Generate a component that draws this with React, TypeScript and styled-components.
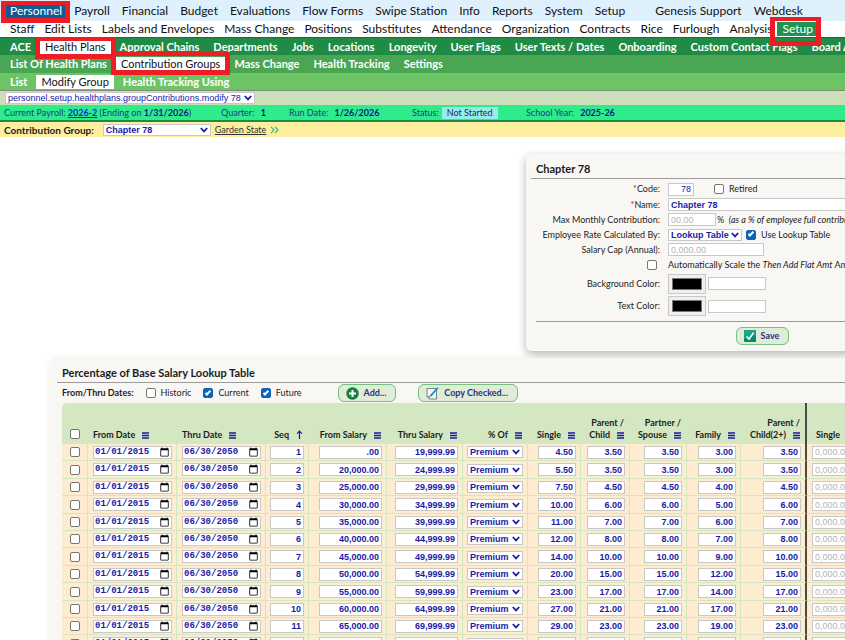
import React from "react";
import styled, { createGlobalStyle, css } from "styled-components";

const ui = `Lato, "Open Sans", sans-serif`;
const field = `"Liberation Sans", Arial, sans-serif`;
const navy = "#1a1aa6";

const GlobalStyle = createGlobalStyle`
  *, *::before, *::after { box-sizing: border-box; }
  body { margin: 0; background: #fff; color: #1c1c1c; font: 10px/14px ${ui}; overflow: hidden; }
`;

const Page = styled.div`
  min-height: 100vh;
  overflow: hidden;
`;

/* ---------- navigation ---------- */

type Tone = "top" | "white" | "dark" | "mid" | "light";
const tones: Record<Tone, { bg: string; fg: string; height: number; border: string; gap: number }> = {
  top: { bg: "#dff0fd", fg: "#111", height: 21, border: "none", gap: 2 },
  white: { bg: "#fff", fg: "#111", height: 17, border: "1px solid #1d6b3a", gap: 0 },
  dark: { bg: "#1f8b45", fg: "#fff", height: 17, border: "none", gap: 4 },
  mid: { bg: "#4aa653", fg: "#fff", height: 18, border: "none", gap: 4 },
  light: { bg: "#6cc464", fg: "#fff", height: 18, border: "1px solid #7d8c78", gap: 4 },
};

const NavBar = styled.nav<{ $tone: Tone }>`
  display: flex;
  align-items: center;
  gap: ${(p) => tones[p.$tone].gap}px;
  padding-top: ${(p) => (p.$tone === "top" ? 1 : 0)}px;
  padding-left: 5px;
  height: ${(p) => tones[p.$tone].height}px;
  background: ${(p) => tones[p.$tone].bg};
  color: ${(p) => tones[p.$tone].fg};
  border-bottom: ${(p) => tones[p.$tone].border};
  font-size: ${(p) => (tones[p.$tone].fg === "#fff" ? 11 : 12)}px;
  font-weight: ${(p) => (tones[p.$tone].fg === "#fff" ? 700 : 400)};
  white-space: nowrap;
`;

const NavLink = styled.a<{ $bg?: string; $fg?: string; $mark?: string; $apart?: boolean }>`
  position: relative;
  flex: none;
  padding: 0 5px;
  line-height: 14px;
  color: inherit;
  text-decoration: none;
  ${(p) => p.$apart && css`margin-left: 18px;`}
  ${(p) =>
    p.$bg &&
    css`
      background: ${p.$bg};
      color: ${p.$fg};
      font-weight: 400;
    `}
  ${(p) =>
    p.$mark &&
    css`
      &::after {
        content: "";
        position: absolute;
        inset: ${p.$mark};
        border: solid #ee1c25;
        border-width: 4px 5px 5px;
        z-index: 2;
      }
    `}
`;

type Item = { t: string; bg?: string; fg?: string; mark?: string; apart?: boolean };
const menus: { tone: Tone; label: string; items: Item[] }[] = [
  {
    tone: "top",
    label: "Modules",
    items: [
      { t: "Personnel", bg: "#0d5c94", fg: "#fff", mark: "-3px -3px -5px -4px" },
      ...["Payroll", "Financial", "Budget", "Evaluations", "Flow Forms", "Swipe Station", "Info", "Reports", "System", "Setup"].map((t) => ({ t })),
      { t: "Genesis Support", apart: true },
      { t: "Webdesk" },
    ],
  },
  {
    tone: "white",
    label: "Personnel",
    items: [
      ...["Staff", "Edit Lists", "Labels and Envelopes", "Mass Change", "Positions", "Substitutes", "Attendance", "Organization", "Contracts", "Rice", "Furlough", "Analysis"].map((t) => ({ t })),
      { t: "Setup", bg: "#1f9150", fg: "#fff", mark: "-5px -3px -10px -7px" },
    ],
  },
  {
    tone: "dark",
    label: "Setup",
    items: [
      { t: "ACE" },
      { t: "Health Plans", bg: "#fff", fg: "#111", mark: "-3px -5px -5px" },
      ...["Approval Chains", "Departments", "Jobs", "Locations", "Longevity", "User Flags", "User Texts / Dates", "Onboarding", "Custom Contact Flags", "Board Approvals"].map((t) => ({ t })),
    ],
  },
  {
    tone: "mid",
    label: "Health plans",
    items: [
      { t: "List Of Health Plans" },
      { t: "Contribution Groups", bg: "#fff", fg: "#111", mark: "-5px -5px -4px" },
      { t: "Mass Change" },
      { t: "Health Tracking" },
      { t: "Settings" },
    ],
  },
  {
    tone: "light",
    label: "Contribution groups",
    items: [{ t: "List" }, { t: "Modify Group", bg: "#fff", fg: "#111" }, { t: "Health Tracking Using" }],
  },
];

/* ---------- form controls ---------- */

const SelectBox = styled.span<{ $width: number; $plain?: boolean }>`
  position: relative;
  display: inline-flex;
  width: ${(p) => p.$width}px;
  height: 12px;
  flex: none;
  vertical-align: middle;
  & select {
    appearance: none;
    width: 100%;
    height: 12px;
    padding: 0 8px 0 2px;
    border: 1px solid #c8c8c8;
    border-radius: 0;
    background: #fff;
    color: ${navy};
    font: ${(p) => (p.$plain ? 400 : 700)} 9px/10px ${field};
  }
  & svg {
    position: absolute;
    right: 3px;
    top: 3px;
    pointer-events: none;
  }
`;

type SelectProps = { width: number; label?: string; value: string; id?: string; plain?: boolean };

function Select({ width, label, value, id, plain }: SelectProps) {
  return (
    <SelectBox $width={width} $plain={plain}>
      <select id={id} aria-label={label} defaultValue={value}>
        <option>{value}</option>
      </select>
      <svg width="8" height="6" viewBox="0 0 8 6" fill="none" stroke={navy} strokeWidth="1.8">
        <path d="M0.8 1 4 4.4 7.2 1" />
      </svg>
    </SelectBox>
  );
}

const TextBox = styled.input<{ $width: number; $right?: boolean; $plain?: boolean }>`
  width: ${(p) => p.$width}px;
  height: 13px;
  flex: none;
  padding: 0 2px;
  border: 1px solid #c8c8c8;
  background: #fff;
  color: ${navy};
  font: ${(p) => (p.$plain ? 400 : 700)} 9px/11px ${field};
  text-align: ${(p) => (p.$right ? "right" : "left")};
  vertical-align: middle;
  &::placeholder { color: #b4b4b4; }
`;

const DateBox = styled.input`
  width: 79px;
  height: 13px;
  padding: 0 1px;
  border: 1px solid #c8c8c8;
  background: #fff;
  color: ${navy};
  font: 700 9px/11px "Liberation Mono", monospace;
  vertical-align: middle;
  &::-webkit-datetime-edit { padding: 0; line-height: 11px; }
  &::-webkit-datetime-edit-fields-wrapper { padding: 0; }
  &::-webkit-datetime-edit-month-field { padding: 0; }
  &::-webkit-datetime-edit-day-field { padding: 0; }
  &::-webkit-datetime-edit-year-field { padding: 0; }
  &::-webkit-calendar-picker-indicator { width: 11px; height: 11px; padding: 0; margin: 0; }
`;

const Check = styled.input.attrs({ type: "checkbox" })`
  appearance: none;
  display: inline-grid;
  place-items: center;
  width: 10px;
  height: 10px;
  flex: none;
  margin: 0;
  border: 1px solid #767676;
  border-radius: 2px;
  background: #fff;
  vertical-align: middle;
  &:checked { background: #0b64b8; border-color: #0b64b8; }
  &:checked::before {
    content: "";
    width: 6px;
    height: 3px;
    margin-bottom: 2px;
    border: solid #fff;
    border-width: 0 0 2px 2px;
    rotate: -45deg;
  }
`;

const CheckLabel = styled.label`
  display: inline-flex;
  align-items: center;
  gap: 5px;
`;

const PillButton = styled.button`
  display: inline-flex;
  align-items: center;
  gap: 5px;
  height: 18px;
  flex: none;
  padding: 0 9px 0 7px;
  border: 1px solid #72c182;
  border-radius: 6px;
  background: #e0ebd8;
  color: #26337f;
  font: 700 9px/14px ${ui};
  white-space: nowrap;
`;

/* ---------- status strips ---------- */

const PathBar = styled.div`
  display: flex;
  align-items: center;
  height: 14px;
  padding-left: 5px;
  background: #ccdfbb;
`;

const PayrollBar = styled.div`
  display: flex;
  align-items: center;
  height: 17px;
  padding-left: 4px;
  background: #2eec8c;
  border-bottom: 2px solid #1d8a4b;
  color: #14457c;
  white-space: nowrap;
  font-size: 9px;
  & b, & strong { color: #12188a; }
  & a { color: #1424e0; font-weight: 700; }
`;

const Fact = styled.span<{ $width: number }>`
  width: ${(p) => p.$width}px;
  flex: none;
  & b { margin-left: 4px; }
`;

const Status = styled.span`
  display: inline-block;
  margin-left: 3px;
  padding: 0 5px;
  line-height: 12px;
  background: #98ebea;
  color: #1c2c50;
`;

const GroupBar = styled.div`
  display: flex;
  align-items: center;
  gap: 4px;
  height: 15px;
  padding-left: 4px;
  background: #fdeea0;
  white-space: nowrap;
  & label { font-weight: 700; font-size: 10px; margin-right: 5px; }
  & a { color: #333; font-size: 9px; }
`;

/* ---------- panels ---------- */

const Canvas = styled.main`
  display: flex;
  flex-direction: column;
  align-items: center;
  gap: 7px;
  min-width: 1520px;
  padding-top: 17px;
`;

const Panel = styled.section<{ $width: number }>`
  width: ${(p) => p.$width}px;
  padding: 8px 5px 6px;
  border-radius: 6px;
  background: #f9f7f4;
  box-shadow: 0 3px 8px rgba(0, 0, 0, 0.3);
`;

const WidePanel = styled(Panel)`
  padding: 8px 7px;
  box-shadow: 0 0 6px rgba(0, 0, 0, 0.08);
`;

const PanelTitle = styled.h2`
  margin: 0;
  padding: 0 5px 2px;
  border-bottom: 1px solid #9c9c9c;
  font: 700 11px/14px ${ui};
`;

const FormGrid = styled.form`
  display: grid;
  grid-template-columns: 129px 1fr;
  column-gap: 8px;
  grid-template-rows: 16px repeat(5, 15px) 23px 22px;
  align-items: center;
  padding-top: 2px;
  white-space: nowrap;
  font-size: 9px;
`;

const FormLabel = styled.label`
  text-align: right;
`;

const Star = styled.span`
  color: #e00;
`;

const Cell = styled.div<{ $gap?: number }>`
  display: flex;
  align-items: center;
  gap: ${(p) => p.$gap ?? 2}px;
  overflow: hidden;
  height: 100%;
`;

const CheckCell = styled.div`
  display: flex;
  justify-content: flex-end;
  padding-right: 3px;
`;

const ColorBox = styled.input.attrs({ type: "color" })`
  width: 38px;
  height: 20px;
  flex: none;
  padding: 0;
  border: 1px solid #c8c8c8;
  background: #efefef;
  &::-webkit-color-swatch-wrapper { padding: 3px; }
  &::-webkit-color-swatch { border: 1px solid #777; }
`;

const Actions = styled.div`
  display: flex;
  justify-content: center;
  margin: 4px 0 0 5px;
  padding-top: 5px;
  border-top: 1px solid #9c9c9c;
`;

const FilterRow = styled.div`
  display: flex;
  align-items: center;
  gap: 12px;
  height: 20px;
  padding-left: 5px;
  font-size: 9px;
  & ${PillButton}:nth-of-type(1) { margin-left: 24px; }
  & ${PillButton}:nth-of-type(2) { margin-left: 10px; }
`;

/* ---------- rate table ---------- */

const RateTable = styled.table`
  table-layout: fixed;
  width: 1396px;
  margin-left: 5px;
  border-collapse: separate;
  border-spacing: 0;
  border-top-left-radius: 5px;
  overflow: hidden;
`;

const HeadCell = styled.th<{ $left?: boolean; $line?: boolean; $center?: boolean }>`
  height: 41px;
  padding: 0 ${(p) => (p.$center ? 0 : 5)}px ${(p) => (p.$center ? 5 : 3)}px ${(p) => (p.$left ? 5 : 0)}px;
  background: #d3e7c3;
  border-right: ${(p) => (p.$line ? "2px solid #4a4a40" : "1px solid #d3e7c3")};
  color: #1c1c1c;
  font: 700 9px/12px ${ui};
  text-align: ${(p) => (p.$center ? "center" : p.$left ? "left" : "right")};
  vertical-align: bottom;
  white-space: nowrap;
  & svg { margin-left: 7px; vertical-align: -1px; }
`;

const Row = styled.tr`
  height: 17px;
  &:nth-child(5n + 2), &:nth-child(5n + 4) { height: 18px; }
`;

const BodyCell = styled.td<{ $center?: boolean; $line?: boolean }>`
  padding: 0 ${(p) => (p.$center ? 0 : 4)}px 0 0;
  background: #fdeccf;
  border-right: ${(p) => (p.$line ? "2px solid #4a4a40" : "1px solid #d3e7c3")};
  border-bottom: 1px solid #d3e7c3;
  line-height: 0;
  text-align: ${(p) => (p.$center ? "center" : "right")};
`;

const MenuIcon = () => (
  <svg width="7" height="7" viewBox="0 0 7 7" stroke={navy} strokeWidth="1.4">
    <path d="M0 1h7M0 3.5h7M0 6h7" />
  </svg>
);

const SortIcon = () => (
  <svg width="7" height="9" viewBox="0 0 7 9" fill="none" stroke={navy} strokeWidth="1.2">
    <path d="M3.5 9V1M1 3.6 3.5 1 6 3.6" />
  </svg>
);

const AddIcon = () => (
  <svg width="13" height="13" viewBox="0 0 13 13">
    <circle cx="6.5" cy="6.5" r="6.2" fill="#14803c" />
    <path d="M6.5 3v7M3 6.5h7" stroke="#fff" strokeWidth="2" />
  </svg>
);

const CopyIcon = () => (
  <svg width="13" height="13" viewBox="0 0 13 13">
    <path d="M1 1.5h9.5v10.5H3.5L1 9.5z" fill="#f4f4f4" stroke="#7c8484" />
    <path d="M1 9.5h2.5V12z" fill="#9aa" stroke="#7c8484" strokeWidth="0.6" />
    <path d="M4.6 8.8 11.8 0.8" stroke="#2490cc" strokeWidth="1.8" />
    <path d="M4 9.6l1.2-1.4" stroke="#333" strokeWidth="0.9" />
  </svg>
);

const SaveIcon = () => (
  <svg width="12" height="12" viewBox="0 0 12 12">
    <rect width="12" height="12" rx="1" fill="#12876f" />
    <path d="M0 0h12v5L0 9z" fill="#1ba287" />
    <path d="M2.6 6.4 5 9.2 9.6 2.6" fill="none" stroke="#fff" strokeWidth="1.6" />
  </svg>
);

const Chevrons = () => (
  <svg width="9" height="8" viewBox="0 0 9 8" fill="none" stroke="#3fae7c" strokeWidth="1.1">
    <path d="M1 0.8 4 4 1 7.2M5 0.8 8 4 5 7.2" />
  </svg>
);

const columns = [
  { width: 89, title: ["From Date"], left: true },
  { width: 89, title: ["Thru Date"], left: true },
  { width: 43, title: ["Seq"], sort: true },
  { width: 78, title: ["From Salary"] },
  { width: 76, title: ["Thru Salary"] },
  { width: 65, title: ["% Of"] },
  { width: 53, title: ["Single"] },
  { width: 49, title: ["Parent /", "Child"] },
  { width: 57, title: ["Partner /", "Spouse"] },
  { width: 54, title: ["Family"] },
  { width: 66, title: ["Parent /", "Child(2+)"], line: true },
  { width: 53, title: ["Single"] },
];

const rates: [string, string, string, string, string, string, string][] = [
  [".00", "19,999.99", "4.50", "3.50", "3.50", "3.00", "3.50"],
  ["20,000.00", "24,999.99", "5.50", "3.50", "3.50", "3.00", "3.50"],
  ["25,000.00", "29,999.99", "7.50", "4.50", "4.50", "4.00", "4.50"],
  ["30,000.00", "34,999.99", "10.00", "6.00", "6.00", "5.00", "6.00"],
  ["35,000.00", "39,999.99", "11.00", "7.00", "7.00", "6.00", "7.00"],
  ["40,000.00", "44,999.99", "12.00", "8.00", "8.00", "7.00", "8.00"],
  ["45,000.00", "49,999.99", "14.00", "10.00", "10.00", "9.00", "10.00"],
  ["50,000.00", "54,999.99", "20.00", "15.00", "15.00", "12.00", "15.00"],
  ["55,000.00", "59,999.99", "23.00", "17.00", "17.00", "14.00", "17.00"],
  ["60,000.00", "64,999.99", "27.00", "21.00", "21.00", "17.00", "21.00"],
  ["65,000.00", "69,999.99", "29.00", "23.00", "23.00", "19.00", "23.00"],
  ["70,000.00", "74,999.99", "32.00", "26.00", "26.00", "22.00", "26.00"],
];

export default function App() {
  return (
    <Page>
      <GlobalStyle />
      <header>
        {menus.map((m) => (
          <NavBar key={m.tone} $tone={m.tone} aria-label={m.label}>
            {m.items.map((i) => (
              <NavLink key={i.t} href="#" $bg={i.bg} $fg={i.fg} $mark={i.mark} $apart={i.apart}>
                {i.t}
              </NavLink>
            ))}
          </NavBar>
        ))}
        <PathBar>
          <Select plain width={250} label="Screen" value="personnel.setup.healthplans.groupContributions.modify 78" />
        </PathBar>
        <PayrollBar>
          <Fact $width={217}>
            Current Payroll: <a href="#">2026-2</a> (Ending on <strong>1/31/2026</strong>)
          </Fact>
          <Fact $width={68}>Quarter: <b>1</b></Fact>
          <Fact $width={123}>Run Date: <b>1/26/2026</b></Fact>
          <Fact $width={114}>Status:<Status>Not Started</Status></Fact>
          <Fact $width={114}>School Year: <b>2025-26</b></Fact>
        </PayrollBar>
        <GroupBar>
          <label htmlFor="group">Contribution Group:</label>
          <Select width={108} id="group" value="Chapter 78" />
          <a href="#">Garden State</a>
          <Chevrons />
        </GroupBar>
      </header>

      <Canvas>
        <Panel $width={468}>
          <PanelTitle>Chapter 78</PanelTitle>
          <FormGrid id="chapter">
            <FormLabel htmlFor="code"><Star>*</Star>Code:</FormLabel>
            <Cell $gap={20}>
              <TextBox id="code" $width={26} $right $plain defaultValue="78" />
              <CheckLabel><Check />Retired</CheckLabel>
            </Cell>
            <FormLabel htmlFor="name"><Star>*</Star>Name:</FormLabel>
            <Cell><TextBox id="name" $width={280} defaultValue="Chapter 78" /></Cell>
            <FormLabel htmlFor="max">Max Monthly Contribution:</FormLabel>
            <Cell $gap={1}>
              <TextBox id="max" $width={48} $plain placeholder="00.00" />
              <span>%&nbsp; <i>(as a % of employee full contribution)</i></span>
            </Cell>
            <FormLabel htmlFor="rate">Employee Rate Calculated By:</FormLabel>
            <Cell $gap={4}>
              <Select id="rate" width={74} value="Lookup Table" />
              <CheckLabel><Check defaultChecked />Use Lookup Table</CheckLabel>
            </Cell>
            <FormLabel htmlFor="cap">Salary Cap (Annual):</FormLabel>
            <Cell><TextBox id="cap" $width={96} $plain placeholder="0,000.00" /></Cell>
            <CheckCell><Check id="scale" /></CheckCell>
            <label htmlFor="scale">Automatically Scale the <i>Then Add Flat Amt</i> Amounts</label>
            <FormLabel htmlFor="bg">Background Color:</FormLabel>
            <Cell>
              <ColorBox id="bg" defaultValue="#000000" />
              <TextBox aria-label="Background color value" $width={58} />
            </Cell>
            <FormLabel htmlFor="fg">Text Color:</FormLabel>
            <Cell>
              <ColorBox id="fg" defaultValue="#000000" />
              <TextBox aria-label="Text color value" $width={58} />
            </Cell>
          </FormGrid>
          <Actions>
            <PillButton type="submit" form="chapter"><SaveIcon />Save</PillButton>
          </Actions>
        </Panel>

        <WidePanel $width={1420}>
          <PanelTitle>Percentage of Base Salary Lookup Table</PanelTitle>
          <FilterRow>
            <strong>From/Thru Dates:</strong>
            <CheckLabel><Check />Historic</CheckLabel>
            <CheckLabel><Check defaultChecked />Current</CheckLabel>
            <CheckLabel><Check defaultChecked />Future</CheckLabel>
            <PillButton type="button"><AddIcon />Add...</PillButton>
            <PillButton type="button"><CopyIcon />Copy Checked...</PillButton>
          </FilterRow>
          <RateTable>
            <colgroup>
              <col width={26} />
              {columns.map((c, i) => <col key={i} width={c.width} />)}
              <col />
            </colgroup>
            <thead>
              <tr>
                <HeadCell $center><Check aria-label="Select all rows" /></HeadCell>
                {columns.map((c, i) => (
                  <HeadCell key={i} scope="col" $left={c.left} $line={c.line}>
                    {c.title.length > 1 && <>{c.title[0]}<br /></>}
                    {c.title[c.title.length - 1]}
                    {c.sort ? <SortIcon /> : <MenuIcon />}
                  </HeadCell>
                ))}
                <HeadCell />
              </tr>
            </thead>
            <tbody>
              {rates.map(([from, thru, ...pct], r) => (
                <Row key={r}>
                  <BodyCell $center><Check aria-label={`Select row ${r + 1}`} /></BodyCell>
                  <BodyCell><DateBox type="date" aria-label="From date" defaultValue="2015-01-01" /></BodyCell>
                  <BodyCell><DateBox type="date" aria-label="Thru date" defaultValue="2050-06-30" /></BodyCell>
                  <BodyCell><TextBox aria-label="Sequence" $width={34} $right defaultValue={r + 1} /></BodyCell>
                  <BodyCell><TextBox aria-label="From salary" $width={63} $right defaultValue={from} /></BodyCell>
                  <BodyCell><TextBox aria-label="Thru salary" $width={63} $right defaultValue={thru} /></BodyCell>
                  <BodyCell><Select width={56} label="Percent of" value="Premium" /></BodyCell>
                  {pct.map((v, k) => (
                    <BodyCell key={k} $line={k === 4}>
                      <TextBox aria-label={columns[k + 6].title.join(" ")} $width={38} $right defaultValue={v} />
                    </BodyCell>
                  ))}
                  <BodyCell><TextBox aria-label="Flat single amount" $width={43} $plain placeholder="0,000.00" /></BodyCell>
                  <BodyCell />
                </Row>
              ))}
            </tbody>
          </RateTable>
        </WidePanel>
      </Canvas>
    </Page>
  );
}
